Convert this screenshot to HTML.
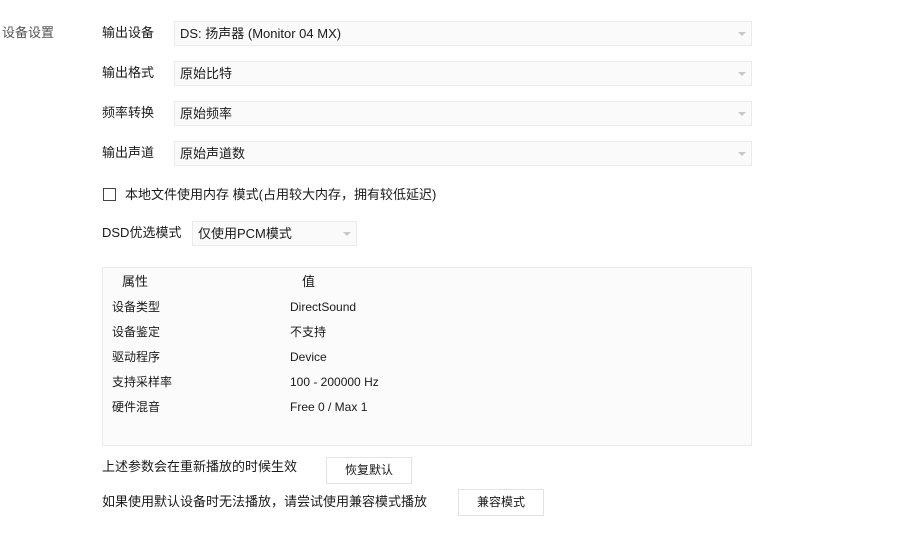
<!DOCTYPE html>
<html><head><meta charset="utf-8"><style>
body{margin:0;width:916px;height:538px;background:#fff;font-family:"Liberation Sans","Noto Sans CJK SC",sans-serif;font-size:13px;color:#1a1a1a;position:relative;overflow:hidden}
.a{position:absolute;white-space:nowrap;line-height:16px}
.sel{position:absolute;left:174px;width:576px;height:23px;background:#fafafa;border:1px solid #ebebeb;box-sizing:content-box}
.sel span{position:absolute;left:5px;top:4px;line-height:16px}
.arr{position:absolute;right:5px;top:10px;width:0;height:0;border-left:4px solid transparent;border-right:4px solid transparent;border-top:4px solid #c8c8c8}
.btn{position:absolute;width:84px;height:25px;border:1px solid #e3e3e3;background:#fff;text-align:center;line-height:25px;font-size:12px}
</style></head><body>
<div class="a" style="left:2px;top:25px;color:#555">设备设置</div>
<div class="a" style="left:102px;top:25px">输出设备</div>
<div class="sel" style="top:21px"><span>DS: 扬声器 (Monitor 04 MX)</span><div class="arr"></div></div>
<div class="a" style="left:102px;top:65px">输出格式</div>
<div class="sel" style="top:61px"><span>原始比特</span><div class="arr"></div></div>
<div class="a" style="left:102px;top:105px">频率转换</div>
<div class="sel" style="top:101px"><span>原始频率</span><div class="arr"></div></div>
<div class="a" style="left:102px;top:145px">输出声道</div>
<div class="sel" style="top:141px"><span>原始声道数</span><div class="arr"></div></div>
<div style="position:absolute;left:103px;top:188px;width:11px;height:11px;border:1px solid #444"></div>
<div class="a" style="left:125px;top:187px">本地文件使用内存 模式(占用较大内存，拥有较低延迟)</div>
<div class="a" style="left:102px;top:225px">DSD优选模式</div>
<div class="sel" style="left:192px;width:163px;top:221px"><span>仅使用PCM模式</span><div class="arr"></div></div>
<div style="position:absolute;left:102px;top:267px;width:648px;height:177px;border:1px solid #ebebeb;background:#fbfbfb"></div>
<div class="a" style="left:122px;top:274px">属性</div>
<div class="a" style="left:302px;top:274px">值</div>
<div class="a" style="left:112px;top:299px;font-size:12px">设备类型</div><div class="a" style="left:290px;top:299px;font-size:12px">DirectSound</div>
<div class="a" style="left:112px;top:324px;font-size:12px">设备鉴定</div><div class="a" style="left:290px;top:324px;font-size:12px">不支持</div>
<div class="a" style="left:112px;top:349px;font-size:12px">驱动程序</div><div class="a" style="left:290px;top:349px;font-size:12px">Device</div>
<div class="a" style="left:112px;top:374px;font-size:12px">支持采样率</div><div class="a" style="left:290px;top:374px;font-size:12px">100 - 200000 Hz</div>
<div class="a" style="left:112px;top:399px;font-size:12px">硬件混音</div><div class="a" style="left:290px;top:399px;font-size:12px">Free 0 / Max 1</div>
<div class="a" style="left:102px;top:459px">上述参数会在重新播放的时候生效</div>
<div class="btn" style="left:326px;top:457px">恢复默认</div>
<div class="a" style="left:102px;top:494px">如果使用默认设备时无法播放，请尝试使用兼容模式播放</div>
<div class="btn" style="left:458px;top:489px">兼容模式</div>
</body></html>
